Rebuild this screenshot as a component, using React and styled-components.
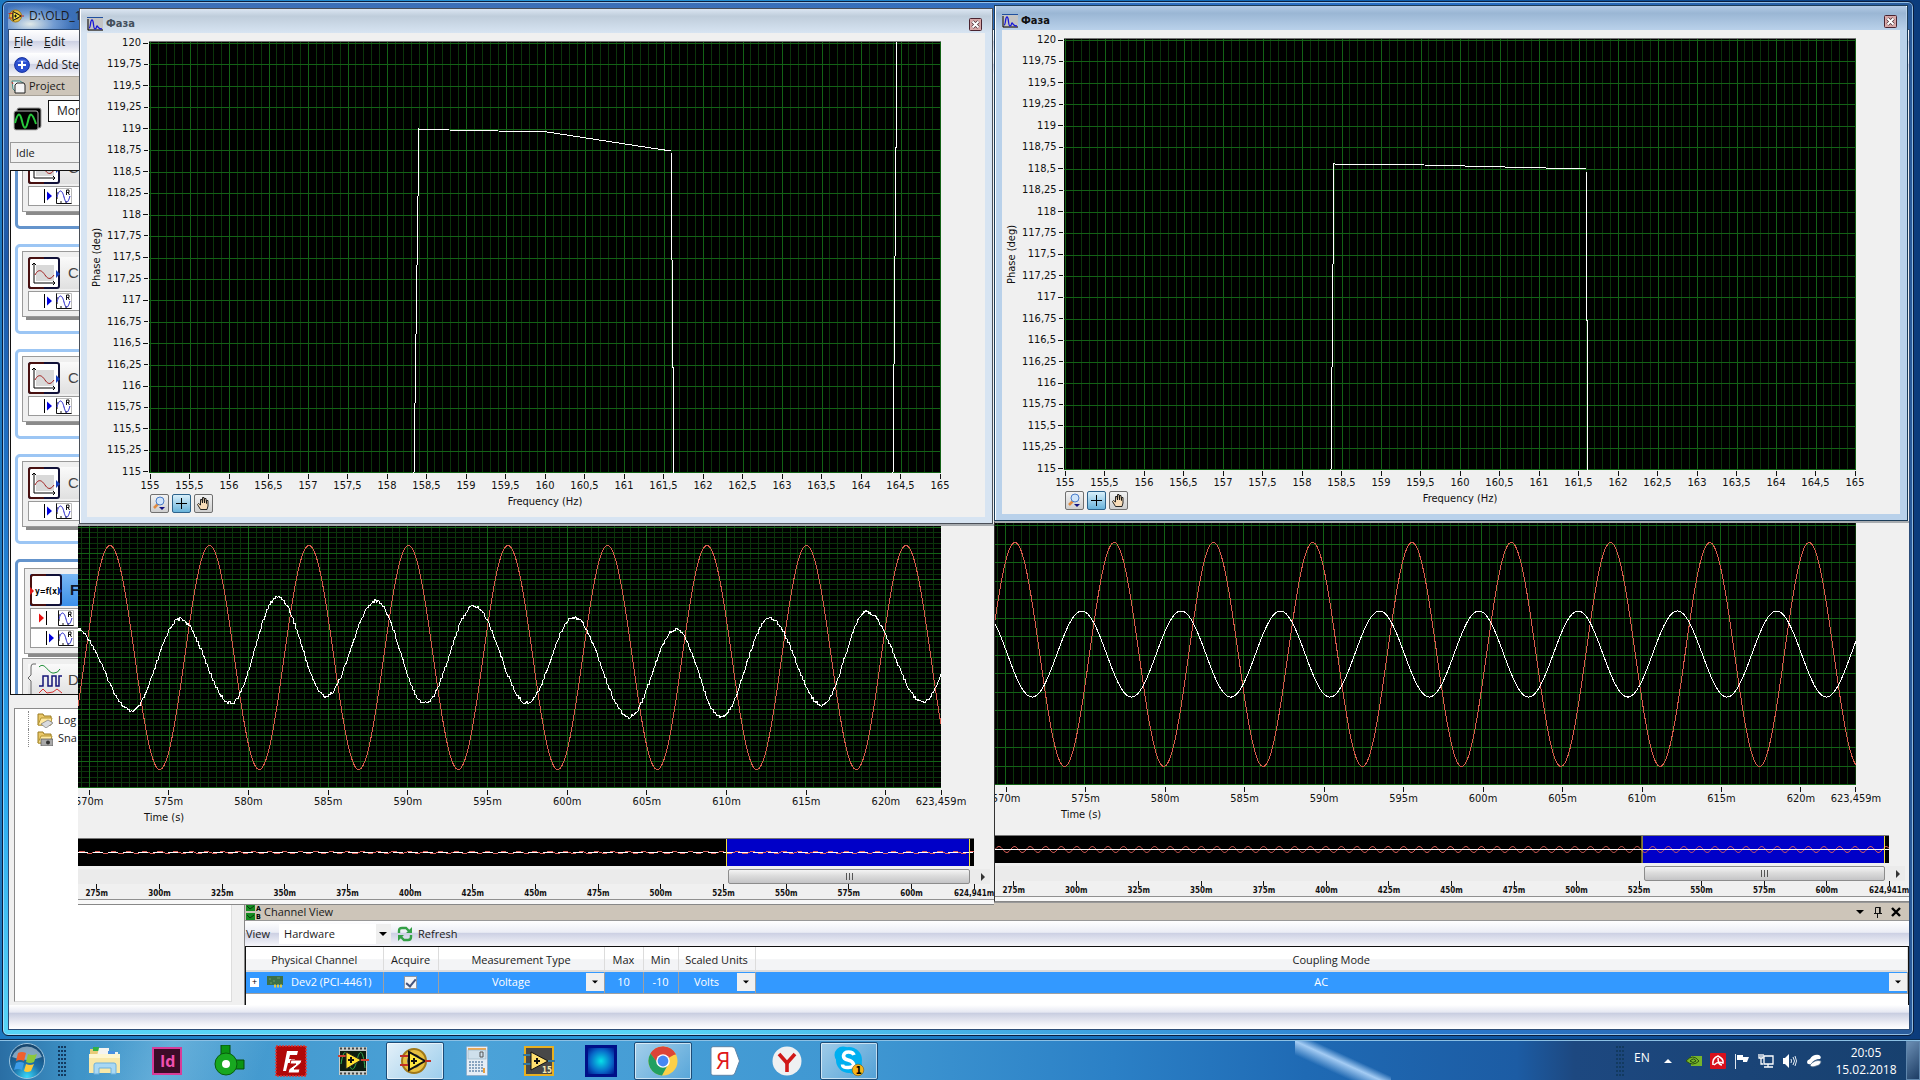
import React, { useState } from "react";
import styled, { createGlobalStyle, css } from "styled-components";

const tahoma = `"DejaVu Sans Condensed", "Noto Sans", sans-serif`;
const segoe = `"Open Sans", "Noto Sans", sans-serif`;

/* ---------- data ---------- */

const PHASE_W = 792;
const PHASE_H = 431;
const WAVE_W = 863;
const WAVE_H = 262;
const PERIOD = 99.5;

const range = (n) => Array.from({ length: n }, (_, i) => i);
const comma = (v) => String(v).replace(".", ",");

const phaseTicks = range(21).map((i) => comma(120 - i * 0.25));
const freqTicks = range(21).map((i) => comma(155 + i * 0.5));

// space = distance to the previous tick, in ms
const timeTicks = [
  ...range(11).map((i) => ({ label: `${570 + i * 5}m`, space: i ? 5 : 0.7 })),
  { label: "623,459m", space: 3.459 },
];
const overviewTicks = [
  ...range(14).map((i) => ({ label: `${275 + i * 25}m`, space: i ? 25 : 7.5 })),
  { label: "624,941m", space: 24.941 },
];

const phaseLeft = ["265,431 270,87 300,88 398,90 522,109 525,431", "744,431 748,0"];
const phaseRight = ["267,431 270,125 360,126 522,130 524,431"];

const sine = (peak, amp, mid, period, width) =>
  range(width + 1)
    .map((x) => `${x},${(mid - amp * Math.cos(((x - peak) * 2 * Math.PI) / period)).toFixed(1)}`)
    .join(" ");

const extremes = [
  [-2, 103], [54, 185], [102, 93], [153, 177], [200, 71], [248, 170], [298, 75], [347, 177],
  [396, 80], [449, 177], [496, 91], [551, 191], [598, 103], [643, 191], [692, 92],
  [744, 179], [789, 86], [845, 176], [892, 90],
];

// cosine steps between the extremes, with a little repeatable noise on top
const noisy = () => {
  const pts = [];
  for (let i = 0; i < extremes.length - 1; i++) {
    const [x0, y0] = extremes[i];
    const [x1, y1] = extremes[i + 1];
    for (let x = x0; x < x1; x++) {
      if (x < 0 || x > WAVE_W) continue;
      const t = (1 - Math.cos((Math.PI * (x - x0)) / (x1 - x0))) / 2;
      const n = Math.sin(x * 12.9898) * 43758.5453;
      pts.push(`${x},${(y0 + (y1 - y0) * t + (n - Math.floor(n) - 0.5) * 3.4).toFixed(1)}`);
    }
  }
  return pts.join(" ");
};

const scopes = [
  { id: "l", active: false, phase: phaseLeft, redPeak: 32, white: noisy(), first: 11, rows: 26, rowStart: 1, minorRows: 5.2, ripple: 1 },
  { id: "r", active: true, phase: phaseRight, redPeak: 20, white: sine(87, 43, 131, PERIOD, WAVE_W), first: 10, rows: 18.53, rowStart: 2, minorRows: 0, ripple: 3 },
];

/* ---------- plots ---------- */

const Grid = ({ w, h, x0 = 0, dx, y0 = 0, dy, minorY, minorX }) => {
  const v = [];
  const mv = [];
  for (let x = x0; x < w; x += dx) v.push(x);
  for (let x = x0 - dx; x < w; x += minorX) if (x > 0) mv.push(x);
  const hz = [];
  const mh = [];
  for (let y = y0; y < h; y += dy) hz.push(y);
  if (minorY) for (let y = y0; y < h; y += minorY) mh.push(y);
  const vPath = (list) => list.map((x) => `M${x.toFixed(1)} 0V${h}`).join("");
  const hPath = (list) => list.map((y) => `M0 ${y.toFixed(1)}H${w}`).join("");
  return (
    <g fill="none" strokeWidth="1" shapeRendering="crispEdges">
      <path d={vPath(mv) + hPath(mh)} stroke="#0b340b" vectorEffect="non-scaling-stroke" />
      <path d={vPath(v) + hPath(hz)} stroke="#136216" vectorEffect="non-scaling-stroke" />
    </g>
  );
};

const Line = ({ points, color = "#fff" }) => (
  <polyline points={points} fill="none" stroke={color} shapeRendering="crispEdges" vectorEffect="non-scaling-stroke" />
);

const PhasePlot = ({ lines }) => (
  <Plot $h={PHASE_H} viewBox={`0 0 ${PHASE_W} ${PHASE_H}`} preserveAspectRatio="none">
    <Grid w={PHASE_W} h={PHASE_H} x0={1.5} dx={39.5} minorX={7.9} y0={1.5} dy={21.45} />
    {lines.map((l) => (
      <Line key={l} points={l} />
    ))}
  </Plot>
);

const WavePlot = ({ s }) => (
  <Plot $h={WAVE_H} viewBox={`0 0 ${WAVE_W} ${WAVE_H}`} preserveAspectRatio="none">
    <Grid w={WAVE_W} h={WAVE_H} x0={s.first + 0.5} dx={79.6} minorX={7.96} y0={s.rowStart + 0.5} dy={s.rows} minorY={s.minorRows} />
    <Line points={sine(s.redPeak, 112, 131.5, PERIOD, WAVE_W)} color="#d85c4c" />
    <Line points={s.white} />
  </Plot>
);

const Overview = ({ ripple }) => (
  <Plot $h={27} viewBox="0 0 896 27" preserveAspectRatio="none">
    <rect x="649" width="242" height="27" fill="#0000c8" />
    <Line points={sine(4, ripple, 13.5, 15.6, 896)} color="#e0605a" />
    <path d="M0 13.5H896" stroke="#fff" strokeDasharray={ripple > 1 ? "none" : "10 5"} />
    <path d="M648.5 0V27M891.5 0V27" stroke="#f0e040" />
  </Plot>
);

/* ---------- icons ---------- */

const DaqIcon = ({ size = 16 }) => (
  <svg width={size} height={size} viewBox="0 0 32 32">
    <circle cx="15" cy="16" r="12" fill="#e8c040" stroke="#a07818" strokeWidth="2" />
    <circle cx="15" cy="16" r="7" fill="#565a60" />
    <path d="M1 11h9M1 20h8" stroke="#c03028" strokeWidth="2" />
    <path d="M10 7v18l16-9z" fill="#ffe640" stroke="#111" strokeWidth="2" />
    <path d="M26 16h6" stroke="#c03028" strokeWidth="2" />
    <path d="M12 16h6M15 13v6" stroke="#111" strokeWidth="2" />
  </svg>
);

const SpectrumIcon = () => (
  <svg width="16" height="14" viewBox="0 0 16 14">
    <rect width="16" height="14" fill="#c4c4c4" />
    <path d="M0 .5h16" stroke="#2050a0" />
    <path d="M1 2v11M1 13h15" stroke="#000" fill="none" />
    <path d="M2 11c2 0 1-8 3-8s1 9 3 9 1-3 2-3 1 3 5 3" stroke="#1818d8" fill="none" strokeWidth="1.3" />
  </svg>
);

const AddIcon = () => (
  <svg width="16" height="16" viewBox="0 0 16 16">
    <circle cx="8" cy="8" r="7.4" fill="#2b4fd0" stroke="#16309c" />
    <path d="M3 5a6 5 0 0110 0z" fill="#7f9af0" opacity=".7" />
    <path d="M8 4v8M4 8h8" stroke="#fff" strokeWidth="2" />
  </svg>
);

const ProjectIcon = () => (
  <svg width="15" height="15" viewBox="0 0 15 15">
    <path d="M1 2h8l3 2v2H5v7L2 10z" fill="#e6efee" stroke="#3c8a86" />
    <path d="M1 3l1 2" stroke="#d03030" />
    <path d="M6 4h7l1 2v8H4V6z" fill="#f4f4f4" stroke="#222" />
  </svg>
);

const SignalIcon = () => (
  <svg width="30" height="26" viewBox="0 0 30 26">
    <rect x="4" y="2" width="24" height="20" rx="2" fill="#000" stroke="#999" />
    <rect x="1" y="5" width="24" height="19" rx="2" fill="#000" stroke="#b5b5b5" />
    <path d="M2 17C5 6 7 6 9 15s4 9 6 0 4-9 8 3" stroke="#28c83c" fill="none" strokeWidth="2" />
  </svg>
);

const StepIcon = () => (
  <svg width="32" height="32" viewBox="0 0 32 32">
    <rect x="1" y="1" width="30" height="30" rx="2" fill="#fff" stroke="#101038" strokeWidth="2" />
    <path d="M16 1H3a2 2 0 00-2 2v26a2 2 0 002 2h13" fill="none" stroke="#481010" strokeWidth="2" />
    <rect x="8" y="8" width="18" height="16" fill="#d9d9d9" />
    <path d="M6 6v20h21M4 8l2-2 2 2M25 24l2 2-2 2" stroke="#000" fill="none" />
    <path d="M7 18c4-8 8-3 10 0s5 6 9 0" stroke="#a01818" fill="none" />
    <path d="M28 13l4 4-4 4z" fill="#1840b8" />
  </svg>
);

const FormulaIcon = () => (
  <svg width="32" height="32" viewBox="0 0 32 32">
    <rect x="1" y="1" width="30" height="30" rx="2" fill="#fff" stroke="#101038" strokeWidth="2" />
    <path d="M16 1H3a2 2 0 00-2 2v26a2 2 0 002 2h13" fill="none" stroke="#481010" strokeWidth="2" />
    <text x="5" y="20" fontSize="8" fontFamily={tahoma}>y=f(x)</text>
    <path d="M0 13l4 4-4 4z" fill="#e01818" />
    <path d="M28 13l4 4-4 4z" fill="#1840b8" />
  </svg>
);

const WaveRefIcon = () => (
  <svg width="16" height="16" viewBox="0 0 16 16">
    <rect width="16" height="16" fill="#fff" />
    <path d="M.5 0v15.500H16M5 15v-2M10 15v-2M0 5h2M0 10h2" stroke="#111" fill="none" />
    <path d="M.5.5h15v15" stroke="#bbb" fill="none" />
    <path d="M1 9c2-8 5-8 7 0s4 6 6-1" stroke="#1818c8" fill="none" />
    <path d="M10.500 7V2h2.500v2.500h-2.500M12 4.500L13.500 7" stroke="#111" fill="none" />
  </svg>
);

const OutArrow = () => (
  <svg width="8" height="14" viewBox="0 0 8 14">
    <path d="M.5 0v14" stroke="#000" />
    <path d="M3 2.500l5 4.500-5 4.500z" fill="#0000e0" />
  </svg>
);

const InArrow = () => (
  <svg width="8" height="14" viewBox="0 0 8 14">
    <path d="M7.500 0v14" stroke="#000" />
    <path d="M0 2.500l5 4.500-5 4.500z" fill="#e81010" />
  </svg>
);

const DaqWavesIcon = () => (
  <svg width="36" height="34" viewBox="0 0 36 34">
    <path d="M8 1H5q-2 0-2 3v8l-3 3 3 3v16" stroke="#666" fill="none" />
    <path d="M11 4c6-6 9 7 15 6q4 0 6-4" stroke="#168a30" fill="none" />
    <path d="M11 23h4V13h5v10h4V13h4v10h3V13h3" stroke="#141478" fill="none" strokeWidth="1.500" />
    <path d="M11 30l4-4 4 4 6-1 4-3 5 4" stroke="#d83030" fill="none" />
  </svg>
);

const FolderIcon = ({ camera }) => (
  <svg width="16" height="16" viewBox="0 0 16 16">
    <path d="M1 13V2h5l1 2h7v9z" fill="#eac868" stroke="#9a7a20" />
    <path d="M1 13l3-7h11l-2 7z" fill="#ffe9a0" stroke="#b39433" />
    {camera ? (
      <g>
        <rect x="4" y="9" width="12" height="7" fill="#a9a9a9" stroke="#555" strokeWidth=".7" />
        <circle cx="11" cy="12.500" r="2" fill="#333" />
      </g>
    ) : (
      <path d="M4 12l7-4 5 3-7 5z" fill="#d8dade" stroke="#777" strokeWidth=".7" />
    )}
  </svg>
);

const ZoomIcon = () => (
  <svg width="15" height="15" viewBox="0 0 15 15">
    <path d="M2 12l4-4" stroke="#e08a40" strokeWidth="2.500" />
    <circle cx="8" cy="5" r="4" fill="#cfe4fa" stroke="#4a7cc8" />
    <path d="M7 11h6l-3 3z" fill="#101080" />
  </svg>
);

const CrossIcon = () => (
  <svg width="15" height="15" viewBox="0 0 15 15">
    <path d="M7.500 2v11M2 7.500h11" stroke="#000" />
  </svg>
);

const HandIcon = () => (
  <svg width="15" height="15" viewBox="0 0 15 15">
    <path d="M4.500 13.500L1.500 8.500l1-1L4.500 9V3.500h1.500L6.500 7V1.500H8L8.500 7V2.500H10L10.500 7.500V4.500H12V10l-1 3.500z" fill="#f8dcb8" stroke="#111" strokeWidth=".9" />
  </svg>
);

const CloseIcon = () => (
  <svg width="13" height="13" viewBox="0 0 13 13">
    <rect x=".5" y=".5" width="12" height="12" rx="1" fill="#d8a8a8" stroke="#4a2430" />
    <path d="M3.500 3.500l6 6M9.500 3.500l-6 6" stroke="#4a3038" strokeWidth="3.400" />
    <path d="M3.500 3.500l6 6M9.500 3.500l-6 6" stroke="#fff" strokeWidth="2" />
  </svg>
);

const ChannelIcon = () => (
  <svg width="16" height="16" viewBox="0 0 16 16">
    <rect width="9" height="7" fill="#148a20" />
    <rect y="9" width="9" height="7" fill="#148a20" />
    <path d="M1 2l3 3 4-3M1 11l3 3 4-3" stroke="#063c0a" fill="none" />
    <text x="10" y="7" fontSize="7" fontWeight="bold" fontFamily={tahoma}>A</text>
    <text x="10" y="15" fontSize="7" fontWeight="bold" fontFamily={tahoma}>B</text>
  </svg>
);

const RefreshIcon = () => (
  <svg width="16" height="16" viewBox="0 0 16 16" fill="none" stroke="#34a046" strokeWidth="2.400">
    <path d="M2 7V5q0-3 3-3h4l3 3M14 9v2q0 3-3 3H7l-3-3" />
    <path d="M15 1v6H9zM1 15V9h6z" fill="#34a046" stroke="none" />
  </svg>
);

const BoardIcon = () => (
  <svg width="16" height="12" viewBox="0 0 16 12">
    <path d="M0 0h16v9H0z" fill="#3c7048" />
    <path d="M2 3h2M6 5h2M10 2h3M3 7h2" stroke="#6c9c64" />
    <path d="M7 10h8" stroke="#d8c850" strokeWidth="3" strokeDasharray="2 1" />
  </svg>
);

const CaretIcon = () => (
  <svg width="8" height="4" viewBox="0 0 8 4">
    <path d="M0 0h8L4 4z" fill="#000" />
  </svg>
);

const PinIcon = () => (
  <svg width="10" height="12" viewBox="0 0 10 12" fill="none" stroke="#111">
    <path d="M2.500 7V1.500h4V7M6.500 1v6M1 7.500h8M4.500 8v4" />
    <path d="M7 1v6" strokeWidth="1.500" />
  </svg>
);

const CrossBold = () => (
  <svg width="10" height="10" viewBox="0 0 10 10">
    <path d="M1 1l8 8M9 1L1 9" stroke="#000" strokeWidth="2.400" />
  </svg>
);

const StartOrb = () => (
  <svg width="38" height="38" viewBox="0 0 38 38">
    <defs>
      <radialGradient id="orb" cx=".5" cy=".95" r=".9">
        <stop offset="0" stopColor="#38d8f8" />
        <stop offset=".45" stopColor="#1c6fa8" />
        <stop offset="1" stopColor="#17466e" />
      </radialGradient>
    </defs>
    <circle cx="19" cy="19" r="17.500" fill="url(#orb)" stroke="#9cc4de" />
    <path d="M4 15a16 16 0 0130 0q-15 6-30 0z" fill="#e8f4fc" opacity=".5" />
    <path d="M10 11q4-2 8 0l-2 8q-4-2-8 0z" fill="#f0602c" />
    <path d="M20 12q4 2 9 0l-3 8q-4 2-8 0z" fill="#8cc83c" />
    <path d="M8 21q4-2 8 0l-2 7q-4-2-8 0z" fill="#3c9ce8" />
    <path d="M18 22q4 2 8 0l-3 7q-4 2-7 0z" fill="#fcc838" />
  </svg>
);

const ExplorerIcon = () => (
  <svg width="34" height="32" viewBox="0 0 34 32">
    <path d="M2 4h8l2 3h18v21H2z" fill="#e8cc78" />
    <path d="M5 2h6v4H5z" fill="#30b048" />
    <path d="M12 4h6v3h-6z" fill="#e04830" />
    <path d="M11 3h10v4h9v4H9z" fill="#f4f4f0" />
    <path d="M20 6h7v3h-7z" fill="#4890e0" />
    <path d="M1 9h31v19H1z" fill="#f8e8a8" />
    <path d="M1 9h31v4H1z" fill="#fdf6d0" />
    <path d="M6 29V20q0-2 2-2h18q2 0 2 2v9h-5v-6H11v6z" fill="#a8d8f4" stroke="#6cb0dc" />
  </svg>
);

const IndesignIcon = () => (
  <svg width="30" height="28" viewBox="0 0 30 28">
    <rect x="1" y="1" width="28" height="26" fill="#3c0c28" stroke="#d83c98" strokeWidth="2" />
    <text x="8" y="20" fontSize="16" fontWeight="bold" fill="#f050b0" fontFamily="Open Sans">Id</text>
  </svg>
);

const ValveIcon = () => (
  <svg width="32" height="32" viewBox="0 0 32 32">
    <path d="M8 0h9v10H8zM20 15h11v9H20z" fill="#0c9414" stroke="#064c0a" />
    <circle cx="13" cy="19" r="11" fill="#18a820" stroke="#085c0c" />
    <circle cx="13" cy="19" r="4" fill="#fff" />
  </svg>
);

const FilezillaIcon = () => (
  <svg width="32" height="32" viewBox="0 0 32 32">
    <rect x="1" y="1" width="30" height="30" fill="#b00808" stroke="#d83838" strokeDasharray="2 1" strokeWidth="1.500" />
    <path d="M8 26l4-20h11l-1 4h-7l-1 4h6l-1 4h-6l-2 8z" fill="#fff" />
    <path d="M16 15h11l-1 3-7 6h6l-1 4H13l1-4 7-5h-6z" fill="#fff" stroke="#b00808" />
  </svg>
);

const LabviewIcon = () => (
  <svg width="32" height="30" viewBox="0 0 32 30">
    <rect x="2" y="1" width="28" height="28" fill="#c8ccc8" />
    <rect x="3" y="5" width="26" height="20" fill="#0c1c10" />
    <path d="M3 2.500h26M3 27.500h26" stroke="#444" strokeWidth="2" strokeDasharray="2 2" />
    <path d="M4 18c3-18 6-12 8-2s5 10 8-2 6-10 8 8" stroke="#38b050" fill="none" />
    <path d="M1 10h9M24 14h8" stroke="#d04030" strokeWidth="2" />
    <path d="M9 6v17l15-9z" fill="#ffe030" stroke="#222" />
    <path d="M11 14h6M14 11v6" stroke="#111" strokeWidth="2" />
  </svg>
);

const CalcIcon = () => (
  <svg width="22" height="30" viewBox="0 0 22 30">
    <rect x=".5" y=".5" width="21" height="29" rx="1" fill="#e6eef6" stroke="#90b0cc" />
    <path d="M2 2h18v3H2z" fill="#f0a850" />
    <rect x="2" y="4" width="18" height="9" fill="#cfe0ec" stroke="#94aec0" strokeWidth=".6" />
    <path d="M14 6h3v5h-3z" stroke="#555" fill="none" />
    <path d="M3 16h15M3 19h15M3 22h15M3 25h15" stroke="#88a4c0" strokeWidth="2" strokeDasharray="2 1" />
    <path d="M17 22h2v5h-2z" fill="#e8a040" />
  </svg>
);

const Labview15Icon = () => (
  <svg width="32" height="30" viewBox="0 0 32 30">
    <rect x="2" y="1" width="28" height="28" fill="#484848" stroke="#e8b020" strokeWidth="2" />
    <path d="M0 9h9M0 18h9M24 15h8" stroke="#38789c" strokeWidth="2" />
    <path d="M8 6v18l17-9z" fill="#ffe070" stroke="#111" />
    <path d="M11 15h6M14 12v6" stroke="#111" strokeWidth="2" />
    <text x="19" y="27" fontSize="8" fontWeight="bold" fill="#f4e8b0" fontFamily={tahoma}>15</text>
  </svg>
);

const GlowIcon = () => (
  <svg width="32" height="32" viewBox="0 0 32 32">
    <defs>
      <radialGradient id="glow" r=".7">
        <stop offset="0" stopColor="#08e0e8" />
        <stop offset=".6" stopColor="#0868c8" />
        <stop offset="1" stopColor="#001890" />
      </radialGradient>
    </defs>
    <rect width="32" height="32" fill="#001088" />
    <rect x="3" y="3" width="26" height="26" fill="url(#glow)" />
  </svg>
);

const ChromeIcon = () => (
  <svg width="30" height="30" viewBox="0 0 30 30">
    <circle cx="15" cy="15" r="14.500" fill="#fcd048" />
    <path d="M15 15L2.500 8A14.500 14.500 0 0127.500 8z" fill="#dc4437" />
    <path d="M15 8.500h13A14.500 14.500 0 002.500 7.500l7 10z" fill="#dc4437" />
    <path d="M2.500 7.500A14.500 14.500 0 0014 29.500l6-11-5 2-5-3z" fill="#22a060" />
    <circle cx="15" cy="15" r="6.800" fill="#fff" />
    <circle cx="15" cy="15" r="5.400" fill="#4688f4" />
  </svg>
);

const YandexIcon = () => (
  <svg width="30" height="30" viewBox="0 0 30 30">
    <path d="M3 .7h19q2 0 3 2l4.500 12.300L25 27q-1 2.300-3 2.300H3q-2 0-2-2V2.700q0-2 2-2z" fill="#fff" stroke="#5c84a8" />
    <text x="6" y="23" fontSize="23" fill="#e01818" fontFamily="Liberation Sans Narrow, Open Sans">Я</text>
  </svg>
);

const YBrowserIcon = () => (
  <svg width="30" height="30" viewBox="0 0 30 30">
    <circle cx="15" cy="15" r="14.500" fill="#eef0f2" />
    <path d="M7 8l8 9 8-9" stroke="#d01818" strokeWidth="3.600" fill="none" />
    <path d="M15 16v10" stroke="#d01818" strokeWidth="3.600" />
  </svg>
);

const SkypeIcon = () => (
  <svg width="32" height="32" viewBox="0 0 32 32">
    <circle cx="10" cy="10" r="8.500" fill="#00aff0" />
    <circle cx="16" cy="15" r="13" fill="#00aff0" />
    <circle cx="21" cy="21" r="8" fill="#00aff0" />
    <path d="M21 10q-1-3-5.500-3t-5 4q0 3 4.500 4t5.500 4-5 3.500-6-3" stroke="#fff" strokeWidth="3.600" fill="none" />
    <circle cx="25" cy="25" r="5.800" fill="#f8b418" stroke="#6e5a20" strokeWidth=".6" />
    <text x="22.500" y="29" fontSize="10" fontWeight="bold" fontFamily={tahoma}>1</text>
  </svg>
);

const TrayIcons = {
  Nvidia: () => (
    <svg width="16" height="16" viewBox="0 0 16 16">
      <path d="M5 3h11v10H5z" fill="#76b52a" />
      <path d="M0 8q7-8 13 0-6 6-13 0z" fill="#76b52a" stroke="#2c5010" />
      <path d="M4 8q4-4 6 0-3 3-6 0z" fill="none" stroke="#234a10" />
    </svg>
  ),
  Avira: () => (
    <svg width="16" height="16" viewBox="0 0 16 16">
      <rect width="16" height="16" rx="1" fill="#d8101c" />
      <path d="M3 12Q2 5 8 3q6 3 5 7-5-2-9 2M8 5q0 7 4 7" stroke="#fff" strokeWidth="1.500" fill="none" />
    </svg>
  ),
  Flag: () => (
    <svg width="16" height="16" viewBox="0 0 16 16">
      <path d="M1.500 1v15" stroke="#dfe6ee" />
      <path d="M3 2h6v2h6l-2 5H9V7H3z" fill="#fff" />
    </svg>
  ),
  Network: () => (
    <svg width="16" height="16" viewBox="0 0 16 16" fill="none" stroke="#fff" strokeWidth="1.300">
      <path d="M1 1v4h4V1M3 1v3M3 5v6h2" />
      <path d="M6 3h9v8H6zM6 14h9M10 11v3" />
    </svg>
  ),
  Volume: () => (
    <svg width="16" height="16" viewBox="0 0 16 16">
      <path d="M1 5h2l4-4v14l-4-4H1z" fill="#fff" />
      <path d="M9 6q1 2 0 4M11 4q3 4 0 8M13 3q3 5 0 10" stroke="#e8eef4" fill="none" />
    </svg>
  ),
  Cloud: () => (
    <svg width="16" height="16" viewBox="0 0 16 16">
      <path d="M1 9q0-2 3-3 3-5 9-4 3 2 1 4-6 0-9 5-4 1-4-2z" fill="#fff" />
      <path d="M4 12q5-6 11-4 0 4-5 5-5 2-6-1z" fill="#fff" stroke="#54708c" strokeWidth=".7" />
    </svg>
  ),
};

/* ---------- pieces ---------- */

const StepCard = ({ title }) => (
  <Group>
    <Step>
      <StepHead>
        <StepIcon />
        <span>{title}</span>
      </StepHead>
      <StepRow $kind="out">
        <OutArrow />
        <WaveRefIcon />
      </StepRow>
    </Step>
  </Group>
);

const PhaseWindow = ({ active, lines }) => {
  const [tool, setTool] = useState("cursor");
  return (
    <FloatWindow $active={active}>
      <FloatTitle $active={active}>
        <SpectrumIcon />
        <h2>Фаза</h2>
        <CloseButton aria-label="Close">
          <CloseIcon />
        </CloseButton>
      </FloatTitle>
      <FloatBody>
        <PlotRow>
          <AxisTitle>Phase (deg)</AxisTitle>
          <YAxis>
            {phaseTicks.map((t) => (
              <li key={t}>{t}</li>
            ))}
          </YAxis>
          <PhasePlot lines={lines} />
        </PlotRow>
        <FreqAxis>
          {freqTicks.map((t) => (
            <Tick key={t}>{t}</Tick>
          ))}
        </FreqAxis>
        <ToolRow>
          <Tools>
            <ToolButton aria-label="Zoom" $on={tool === "zoom"} onClick={() => setTool("zoom")}>
              <ZoomIcon />
            </ToolButton>
            <ToolButton aria-label="Cursor" $on={tool === "cursor"} onClick={() => setTool("cursor")}>
              <CrossIcon />
            </ToolButton>
            <ToolButton aria-label="Pan" $on={tool === "pan"} onClick={() => setTool("pan")}>
              <HandIcon />
            </ToolButton>
          </Tools>
          <span>Frequency (Hz)</span>
        </ToolRow>
      </FloatBody>
    </FloatWindow>
  );
};

const Scale = ({ ticks, small }) => (
  <ScaleRow $small={small}>
    {ticks.map((t) => (
      <React.Fragment key={t.label}>
        <Spacer $grow={t.space} />
        <Tick $small={small}>{t.label}</Tick>
      </React.Fragment>
    ))}
  </ScaleRow>
);

const ScopePanel = ({ s }) => (
  <Panel $divider={s.active}>
    <WaveArea>
      <WavePlot s={s} />
      <Scale ticks={timeTicks} />
      <TimeTitle>Time (s)</TimeTitle>
    </WaveArea>
    <OverviewArea>
      <Overview ripple={s.ripple} />
    </OverviewArea>
    <ScrollTrack>
      <Spacer $grow={651} />
      <ScrollThumb aria-label="Scroll">
        <i />
        <i />
        <i />
      </ScrollThumb>
      <ScrollArrow aria-label="Scroll right" />
    </ScrollTrack>
    <OverviewArea>
      <Scale ticks={overviewTicks} small />
    </OverviewArea>
  </Panel>
);

const CellSelect = ({ label, value }) => (
  <SelectWrap>
    <select aria-label={label} defaultValue={value}>
      <option>{value}</option>
    </select>
    <SelectArrow>
      <CaretIcon />
    </SelectArrow>
  </SelectWrap>
);

const ChannelView = () => (
  <Channels>
    <ChannelHeader>
      <ChannelIcon />
      <h3>Channel View</h3>
      <HeaderButton aria-label="Menu">
        <CaretIcon />
      </HeaderButton>
      <HeaderButton aria-label="Pin">
        <PinIcon />
      </HeaderButton>
      <HeaderButton aria-label="Close">
        <CrossBold />
      </HeaderButton>
    </ChannelHeader>
    <ViewBar>
      <label htmlFor="view">View</label>
      <ViewSelect>
        <select id="view" defaultValue="Hardware">
          <option>Hardware</option>
        </select>
        <CaretIcon />
      </ViewSelect>
      <RefreshButton>
        <RefreshIcon />
        Refresh
      </RefreshButton>
    </ViewBar>
    <TableBox>
      <Table>
        <colgroup>
          <Col $w={137} />
          <Col $w={55} />
          <Col $w={166} />
          <Col $w={39} />
          <Col $w={35} />
          <Col $w={77} />
          <col />
        </colgroup>
        <thead>
          <tr>
            <th>Physical Channel</th>
            <th>Acquire</th>
            <th>Measurement Type</th>
            <th>Max</th>
            <th>Min</th>
            <th>Scaled Units</th>
            <th>Coupling Mode</th>
          </tr>
        </thead>
        <tbody>
          <tr>
            <td>
              <Device>
                <Expander aria-label="Expand">+</Expander>
                <BoardIcon />
                <span>Dev2 (PCI-4461)</span>
              </Device>
            </td>
            <td>
              <Check type="checkbox" defaultChecked aria-label="Acquire" />
            </td>
            <td><CellSelect label="Measurement Type" value="Voltage" /></td>
            <td>10</td>
            <td>-10</td>
            <td><CellSelect label="Scaled Units" value="Volts" /></td>
            <td><CellSelect label="Coupling Mode" value="AC" /></td>
          </tr>
        </tbody>
      </Table>
    </TableBox>
  </Channels>
);

const apps = [
  { name: "Explorer", Icon: ExplorerIcon },
  { name: "InDesign", Icon: IndesignIcon },
  { name: "Valve", Icon: ValveIcon },
  { name: "FileZilla", Icon: FilezillaIcon },
  { name: "LabVIEW", Icon: LabviewIcon },
  { name: "SignalExpress", Icon: () => <DaqIcon size={32} />, state: "active" },
  { name: "Calculator", Icon: CalcIcon },
  { name: "LabVIEW 15", Icon: Labview15Icon },
  { name: "Glow", Icon: GlowIcon },
  { name: "Chrome", Icon: ChromeIcon, state: "open" },
  { name: "Yandex", Icon: YandexIcon },
  { name: "Yandex Browser", Icon: YBrowserIcon },
  { name: "Skype", Icon: SkypeIcon, state: "open" },
];

export default function App() {
  return (
    <Desktop>
      <GlobalStyle />
      <MainWindow>
        <Workspace>
          <TitleBar>
            <DaqIcon />
            <h1>D:\OLD_1</h1>
          </TitleBar>
          <Client>
            <MenuBar>
              <button><u>F</u>ile</button>
              <button><u>E</u>dit</button>
            </MenuBar>
            <ToolBar>
              <button>
                <AddIcon />
                Add Ste
              </button>
            </ToolBar>
            <Columns>
              <Sidebar>
                <SideTitle>
                  <ProjectIcon />
                  Project
                </SideTitle>
                <ModeRow>
                  <SignalIcon />
                  <select aria-label="Mode" defaultValue="Mon">
                    <option>Mon</option>
                  </select>
                </ModeRow>
                <Status>Idle</Status>
                <StepList>
                  <StepCard title="C" />
                  <StepCard title="C" />
                  <StepCard title="C" />
                  <StepCard title="C" />
                  <Group $selected>
                    <Step $selected>
                      <StepHead $selected>
                        <FormulaIcon />
                        <span>F</span>
                      </StepHead>
                      <StepRow>
                        <InArrow />
                        <WaveRefIcon />
                      </StepRow>
                      <StepRow $kind="out">
                        <OutArrow />
                        <WaveRefIcon />
                      </StepRow>
                    </Step>
                    <Step>
                      <StepHead $tight>
                        <DaqWavesIcon />
                        <span>D</span>
                      </StepHead>
                    </Step>
                  </Group>
                </StepList>
                <Tree>
                  <li>
                    <FolderIcon />
                    Log
                  </li>
                  <li>
                    <FolderIcon camera />
                    Sna
                  </li>
                </Tree>
              </Sidebar>
              <ChannelView />
            </Columns>
            <StatusBar />
          </Client>
        </Workspace>
        <Scopes>
          {scopes.map((s) => (
            <ScopeColumn key={s.id} $active={s.active}>
              <PhaseWindow active={s.active} lines={s.phase} />
              <ScopePanel s={s} />
            </ScopeColumn>
          ))}
        </Scopes>
      </MainWindow>
      <Taskbar>
        <StartButton aria-label="Start">
          <StartOrb />
        </StartButton>
        <Grip />
        <AppButtons>
          {apps.map(({ name, Icon, state }) => (
            <AppButton key={name} aria-label={name} $state={state}>
              <Icon />
            </AppButton>
          ))}
        </AppButtons>
        <Grip />
        <Lang>EN</Lang>
        <Tray>
          <svg width="8" height="4" viewBox="0 0 8 4">
            <path d="M0 4h8L4 0z" fill="#fff" />
          </svg>
          {Object.entries(TrayIcons).map(([name, Icon]) => (
            <Icon key={name} />
          ))}
        </Tray>
        <Clock>
          <span>20:05</span>
          <span>15.02.2018</span>
        </Clock>
        <ShowDesktop aria-label="Show desktop" />
      </Taskbar>
    </Desktop>
  );
}

/* ---------- styles ---------- */

const GlobalStyle = createGlobalStyle`
  * { box-sizing: border-box; }
  body { margin: 0; background: #0c4a94; }
  h1, h2, h3, ul { margin: 0; padding: 0; font-weight: normal; font-size: inherit; list-style: none; }
  button, select { font: inherit; color: inherit; border: 0; padding: 0; background: none; }
  select { appearance: none; }
  svg { display: block; flex: none; }
`;

const Desktop = styled.div`
  min-height: 100vh;
  display: flex;
  flex-direction: column;
  overflow: hidden;
  background: linear-gradient(to right, #1c78c0, #2a98d8 30%, #1060b0 70%, #0c3c7c);
  font: 12px/16px ${segoe};
  color: #1a1a1a;
`;

const MainWindow = styled.main`
  flex: 1;
  display: grid;
  grid-template-columns: 76px minmax(0, 1fr) 4px;
  margin: 1px 6px 4px 2px;
  border-radius: 6px;
  border: 1px solid #0a1c3c;
  box-shadow: inset 0 0 0 1px rgba(190, 230, 255, 0.7);
  padding: 0;
  background: linear-gradient(to right, rgba(44, 96, 160, 0) 35%, rgba(36, 110, 200, 0.9) 75%, #2a5c9c),
    linear-gradient(#3c70b8, #1c58a8 25%, #2078cc 50%, #28a8f0 75%, #58d4f6);
`;

const Workspace = styled.div`
  grid-area: 1 / 1 / 2 / 4;
  display: flex;
  flex-direction: column;
  min-width: 0;
  padding: 0 3px 5px 5px;
`;

const TitleBar = styled.header`
  height: 27px;
  flex: none;
  display: flex;
  align-items: center;
  gap: 5px;
  width: 70px;
  background: radial-gradient(ellipse at 22px 22px, rgba(255, 255, 240, 0.85), rgba(200, 224, 250, 0.4) 24px, rgba(255, 255, 255, 0) 44px);

  h1 {
    white-space: nowrap;
    font-size: 12px;
  }
`;

const Client = styled.div`
  flex: 1;
  display: flex;
  flex-direction: column;
  background: #f0f0f0;
  border: 1px solid #dce8f4;
  outline: 1px solid #2c4c78;
  outline-offset: -1px;
`;

const barFill = css`
  background: linear-gradient(#fff, #ebedf5 45%, #cdd1e4 50%, #f6f6fa);
`;

const MenuBar = styled.nav`
  height: 23px;
  flex: none;
  display: flex;
  align-items: center;
  gap: 11px;
  padding-left: 5px;
  ${barFill}
`;

const ToolBar = styled.div`
  height: 23px;
  flex: none;
  display: flex;
  align-items: center;
  padding-left: 5px;
  ${barFill}

  button {
    display: flex;
    gap: 6px;
    white-space: nowrap;
  }
`;

const Columns = styled.div`
  flex: 1;
  display: flex;
`;

const Sidebar = styled.aside`
  width: 235px;
  flex: none;
  display: flex;
  flex-direction: column;
`;

const SideTitle = styled.h2`
  && {
    height: 20px;
    display: flex;
    align-items: center;
    gap: 3px;
    padding-left: 2px;
    background: #cdc5b9;
    border: 1px solid #a8a298;
    border-left: 0;
    font-size: 11px;
  }
`;

const ModeRow = styled.div`
  height: 46px;
  display: flex;
  align-items: flex-start;
  padding: 4px 0 0 4px;
  gap: 5px;

  svg {
    margin-top: 6px;
  }
  select {
    height: 22px;
    width: 180px;
    padding-left: 8px;
    background: #fff;
    border: 1px solid #111;
  }
`;

const Status = styled.div`
  height: 21px;
  margin: 0 1px 7px;
  padding-left: 5px;
  line-height: 19px;
  border: 1px solid #9a9a9a;
  font-size: 11px;
`;

const StepList = styled.section`
  flex: none;
  height: 525px;
  margin-left: 1px;
  padding-left: 4px;
  overflow: hidden;
  display: flex;
  flex-direction: column;
  gap: 15px;
  background: #fff;
  border: 1px solid #111;
  border-right: 0;

  & > :first-child {
    margin-top: -32px;
    border-color: #6494cc;
  }
`;

const Group = styled.div`
  flex: none;
  width: 190px;
  height: ${(p) => (p.$selected ? "180px" : "90px")};
  padding: ${(p) => (p.$selected ? "6px 4px" : "4px")};
  display: flex;
  flex-direction: column;
  gap: 4px;
  border: 3px solid ${(p) => (p.$selected ? "#6494cc" : "#9cc6f4")};
  border-radius: 5px;
`;

const Step = styled.div`
  padding: 5px 0 5px 5px;
  margin-left: ${(p) => (p.$selected ? "2px" : "0")};
  background: #efefef;
  border: 1px solid #9a9a9a;
  box-shadow: 4px 3px 0 #8a8a8a;
`;

const StepHead = styled.div`
  display: flex;
  align-items: center;
  gap: ${(p) => (p.$tight ? "4px" : "8px")};
  height: 32px;
  margin-bottom: 2px;
  color: ${(p) => (p.$selected ? "#101828" : "#444")};
  font: ${(p) => (p.$selected ? "bold" : "normal")} 15px/18px "Liberation Sans", sans-serif;
  background: ${(p) =>
    p.$selected ? "linear-gradient(#7ab8f4, #3c90ea)" : "linear-gradient(#fafafa, #e0e0e0)"};
`;

const StepRow = styled.div`
  height: 20px;
  display: flex;
  align-items: center;
  gap: ${(p) => (p.$kind === "out" ? "4px" : "11px")};
  padding-left: ${(p) => (p.$kind === "out" ? "15px" : "8px")};
  background: #fff;
  border: 1px solid #9a9a9a;
`;

const Tree = styled.ul`
  && {
    flex: 1;
    margin: 13px 12px 3px 5px;
    padding: 2px 0 0 13px;
    background: #fff;
    border: 1px solid #8a8a8a;
    border-right-color: #ddd;
    border-bottom-color: #ddd;
  }
  li {
    display: flex;
    align-items: center;
    gap: 5px;
    height: 18px;
    font-size: 11px;
  }
  li::before {
    content: "";
    width: 3px;
    align-self: stretch;
    border-left: 1px dotted #888;
  }
`;

const Channels = styled.section`
  flex: 1;
  min-width: 0;
  align-self: flex-end;
  border-left: 1px solid #888;
  font: 11px/14px ${segoe};
`;

const ChannelHeader = styled.header`
  height: 20px;
  display: flex;
  align-items: center;
  gap: 8px;
  padding: 0 8px 0 1px;
  background: #cdc5b9;
  border: solid #989898;
  border-width: 2px 0 1px;

  h3 {
    flex: 1;
    margin-left: -6px;
  }
`;

const HeaderButton = styled.button`
  display: flex;
  width: 10px;
  justify-content: center;
`;

const ViewBar = styled.div`
  height: 25px;
  display: flex;
  align-items: center;
  padding-left: 1px;
  ${barFill}
`;

const ViewSelect = styled.div`
  display: flex;
  align-items: center;
  width: 112px;
  height: 20px;
  margin: 0 6px 0 9px;
  padding-right: 4px;
  background: linear-gradient(to right, #fff 97px, #efefef 97px);

  select {
    flex: 1;
    padding-left: 5px;
  }
`;

const RefreshButton = styled.button`
  display: flex;
  align-items: center;
  gap: 5px;
`;

const TableBox = styled.div`
  height: 59px;
  background: #fff;
  border: 1px solid #111;
  border-bottom: 0;
`;

const Col = styled.col`
  width: ${(p) => p.$w}px;
`;

const Table = styled.table`
  width: 100%;
  table-layout: fixed;
  border-collapse: collapse;
  text-align: center;
  white-space: nowrap;

  th {
    height: 24px;
    padding: 2px 0 0;
    font-weight: normal;
    background: linear-gradient(#fff 50%, #f3f4f6 55%);
    border: solid #dcdcdc;
    border-width: 0 1px 2px 0;
  }
  td {
    height: 22px;
    padding: 0;
    color: #fff;
    background: #3399ff;
    border: 1px solid #a0a0a0;
    border-left: 0;
    vertical-align: middle;
  }
`;

const Device = styled.div`
  display: flex;
  align-items: center;
  gap: 8px;
  padding-left: 4px;
`;

const Expander = styled.button`
  width: 9px;
  height: 9px;
  background: #fff;
  color: #000;
  font-size: 9px;
  line-height: 8px;
`;

const Check = styled.input`
  display: block;
  width: 13px;
  height: 13px;
  margin: 0 auto;
  appearance: none;
  background: #f4f6f8;
  border: 1px solid #8c98a8;

  &:checked::after {
    content: "";
    display: block;
    width: 4px;
    height: 8px;
    margin: 0 auto;
    border: solid #44547c;
    border-width: 0 2px 2px 0;
    transform: rotate(40deg);
  }
`;

const SelectWrap = styled.div`
  display: grid;
  align-items: center;

  select {
    grid-area: 1 / 1;
    width: 100%;
    padding-right: 20px;
    text-align-last: center;
  }
`;

const SelectArrow = styled.span`
  grid-area: 1 / 1;
  justify-self: end;
  display: flex;
  align-items: center;
  justify-content: center;
  width: 18px;
  height: 18px;
  background: #f0f0f0;
  pointer-events: none;

  svg {
    width: 6px;
  }
`;

const StatusBar = styled.footer`
  flex: none;
  height: 24px;
  background: linear-gradient(#fff, #e6e8f2 30%, #c8cde0 34%, #f2f2f8 80%, #fff);
`;

const Scopes = styled.div`
  grid-area: 1 / 2 / 2 / 3;
  z-index: 1;
  display: grid;
  grid-template-columns: minmax(0, 916fr) minmax(0, 915fr);
  align-items: start;
  align-self: start;
  margin-left: -1px;
  font: 11px/12px ${tahoma};
  color: #111;
`;

const ScopeColumn = styled.section`
  margin-top: ${(p) => (p.$active ? "3px" : "6px")};
`;

const FloatWindow = styled.article`
  margin: ${(p) => (p.$active ? "0 1px 0 0" : "0 1px")};
  border: 1px solid ${(p) => (p.$active ? "#1c3c58" : "#4a4f58")};
  background: ${(p) => (p.$active ? "#b9d1ea" : "#d7e4f2")};
  padding: 0 7px 6px;
  box-shadow: inset 1px 1px 0 #fff;
`;

const FloatTitle = styled.header`
  height: 24px;
  display: flex;
  align-items: center;
  gap: 3px;
  margin: 0 -6px;
  padding: 7px 9px 1px 6px;
  background: ${(p) =>
    p.$active ? "linear-gradient(#b4cbe6, #9ab6d4 30%, #b9d1ea)" : "linear-gradient(#dbe6f2, #bfcddb 30%, #d7e4f2)"};

  h2 {
    flex: 1;
    font-weight: bold;
    color: ${(p) => (p.$active ? "#111" : "#44505c")};
  }
`;

const CloseButton = styled.button`
  display: flex;
`;

const FloatBody = styled.div`
  padding: 9px 44px 3px 0;
  background: #f0f0f0;
`;

const PlotRow = styled.div`
  display: flex;
`;

const AxisTitle = styled.div`
  width: 20px;
  flex: none;
  display: flex;
  align-items: center;
  justify-content: center;
  line-height: 20px;
  writing-mode: vertical-rl;
  transform: rotate(180deg);
`;

const YAxis = styled.ul`
  && {
    width: 42px;
    flex: none;
    display: flex;
    flex-direction: column;
    justify-content: space-between;
    padding: 1px 1px 1px 0;
  }
  li {
    height: 0;
    display: flex;
    align-items: center;
    justify-content: flex-end;
    gap: 2px;
  }
  li::after {
    content: "";
    width: 5px;
    height: 1px;
    background: #111;
  }
`;

const Plot = styled.svg`
  && {
    flex: 1 1 0;
  }
  width: 100%;
  min-width: 0;
  height: ${(p) => p.$h}px;
  background: #000;
  box-shadow: 0 -1px 0 #777;
`;

const FreqAxis = styled.div`
  display: flex;
  justify-content: space-between;
  margin: 1px 1px 2px 63px;
  height: 18px;
`;

const Tick = styled.span`
  width: 0;
  display: flex;
  flex-direction: column;
  align-items: center;
  white-space: nowrap;
  font: ${(p) => (p.$small ? "bold 8px/10px" : "11px/12px")} ${tahoma};

  &::before {
    content: "";
    flex: none;
    width: 1px;
    height: 5px;
    margin-bottom: ${(p) => (p.$small ? "0" : "1px")};
    background: #111;
  }
`;

const ToolRow = styled.div`
  display: grid;
  justify-items: center;
  padding-left: 62px;
  height: 20px;

  & > * {
    grid-area: 1 / 1;
  }
  & > span {
    margin-top: 2px;
  }
`;

const Tools = styled.div`
  justify-self: start;
  display: flex;
  gap: 3px;
  padding-left: 1px;
`;

const ToolButton = styled.button`
  width: 19px;
  height: 19px;
  display: flex;
  align-items: center;
  justify-content: center;
  border: 1px solid ${(p) => (p.$on ? "#2c628b" : "#707070")};
  border-radius: 2px;
  background: ${(p) => (p.$on ? "linear-gradient(#d8effa, #68b3db)" : "linear-gradient(#f2f2f2, #cfcfcf)")};
`;

const Panel = styled.div`
  background: #f0f0f0;
  border-top: 2px solid #a8acb0;
  border-bottom: 1px solid #888;
  border-left: ${(p) => (p.$divider ? "1px solid #333" : "0")};
  box-shadow: inset 0 -4px 0 #f8f8f8, inset 0 -5px 0 #909090;
  padding-bottom: 5px;
  overflow: hidden;
`;

const WaveArea = styled.div`
  margin-right: 53px;
  height: 313px;
`;

const ScaleRow = styled.div`
  display: flex;
  height: ${(p) => (p.$small ? "15px" : "22px")};
  padding: ${(p) => (p.$small ? "0" : "2px")} 0 0;
  font-size: 11px;
`;

const Spacer = styled.i`
  flex: ${(p) => p.$grow} 0 0;
`;

const TimeTitle = styled.div`
  padding: 2px 0 0 66px;
`;

const OverviewArea = styled.div`
  margin-right: 20px;
`;

const ScrollTrack = styled.div`
  display: flex;
  align-items: stretch;
  height: 15px;
  margin: 3px 4px 0 0;
  background: #ebebeb;
`;

const ScrollThumb = styled.button`
  flex: 240 0 0;
  display: flex;
  align-items: center;
  justify-content: center;
  gap: 2px;
  border: 1px solid #8c8c8c;
  border-radius: 2px;
  background: linear-gradient(#f4f4f4, #dcdcdc 45%, #c4c4c6);

  i {
    width: 1px;
    height: 7px;
    background: #555;
  }
`;

const ScrollArrow = styled.button`
  width: 20px;

  &::after {
    content: "";
    display: block;
    width: 0;
    margin-left: 11px;
    border: solid transparent;
    border-width: 4px;
    border-left-color: #333;
    border-right: 0;
  }
`;

const Taskbar = styled.footer`
  height: 40px;
  flex: none;
  display: flex;
  align-items: center;
  padding-left: 7px;
  color: #fff;
  border-top: 1px solid #8cc0e4;
  box-shadow: 0 -1px 0 #0c2c50;
  background: linear-gradient(to top right, transparent 34%, #a4ccf4 50%, transparent 60%) 71% 0 / 96px 44px no-repeat,
    linear-gradient(110deg, transparent 5%, rgba(170, 220, 245, 0.35) 9%, transparent 14%),
    linear-gradient(to right, #2a6ea4, #3f94c8 4%, #4ba2d8 25%, #3f97d2 45%, #2b80c6 58%, #1f6ab4 68%, #1c5ca4 79%, #1d4880 82%, #17406e);
`;

const StartButton = styled.button`
  width: 40px;
  display: flex;
  justify-content: center;
`;

const Grip = styled.span`
  width: 9px;
  height: 30px;
  margin: 0 9px 0 11px;
  background: radial-gradient(circle at 1px 1px, #123a60 1px, transparent 1px) 0 0 / 3px 4px;
`;

const AppButtons = styled.div`
  flex: 1;
  display: flex;
  gap: 4px;
`;

const AppButton = styled.button`
  width: 58px;
  height: 38px;
  display: flex;
  align-items: center;
  justify-content: center;
  border-radius: 2px;
  ${(p) =>
    p.$state &&
    css`
      border: 1px solid #1c4c78;
      box-shadow: inset 0 0 0 1px rgba(255, 255, 255, 0.6);
      background: ${p.$state === "active"
        ? "linear-gradient(135deg, rgba(255,255,255,.85), rgba(210,234,250,.6))"
        : "linear-gradient(135deg, rgba(255,255,255,.5), rgba(255,255,255,.1))"};
    `}
`;

const Lang = styled.span`
  margin-bottom: 6px;
  width: 30px;
`;

const Tray = styled.div`
  display: flex;
  align-items: center;
  gap: 8px;

  svg:first-child {
    margin-right: 6px;
  }
`;

const Clock = styled.time`
  width: 84px;
  padding-left: 4px;
  display: flex;
  flex-direction: column;
  align-items: center;
  line-height: 17px;
`;

const ShowDesktop = styled.button`
  width: 14px;
  align-self: stretch;
  border: 1px solid #5f86ac;
  background: linear-gradient(135deg, #6c8fb4, #1c3c64);
`;
